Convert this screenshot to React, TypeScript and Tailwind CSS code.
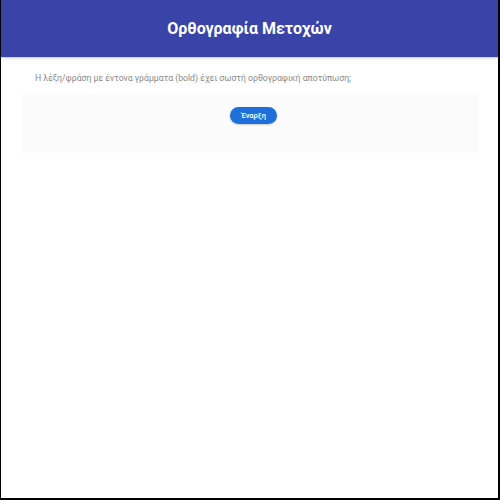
export default function App() {
  return (
    <div
      className="h-[500px] w-[500px] overflow-hidden border-l border-r-2 border-b-2 border-black bg-white"
      style={{ fontFamily: 'Roboto, "Noto Sans", sans-serif' }}
    >
      {/* Header */}
      <header className="flex h-[57px] items-center justify-center bg-[#3a44a8] shadow-[0_1px_2px_rgba(0,0,0,0.25)]">
        <h1 className="text-[16px] font-bold text-white">Ορθογραφία Μετοχών</h1>
      </header>

      {/* Card */}
      <section className="mx-[20px] mt-[4px] bg-[#fbfbfb]">
        <div className="bg-white px-[14px] pt-[11px] pb-[8px]">
          <p className="text-[8.7px] text-[#8a8a8a]">
            Η λέξη/φράση με έντονα γράμματα (bold) έχει σωστή ορθογραφική αποτύπωση;
          </p>
        </div>
        <div className="flex justify-center pl-[8px] pt-[14px] pb-[29px]">
          <button className="h-[17px] rounded-full bg-[#1e6fd9] px-[11px] text-[7.5px] font-medium text-white shadow-[0_1px_2px_rgba(0,0,0,0.2)]">
            Έναρξη
          </button>
        </div>
      </section>
    </div>
  )
}
